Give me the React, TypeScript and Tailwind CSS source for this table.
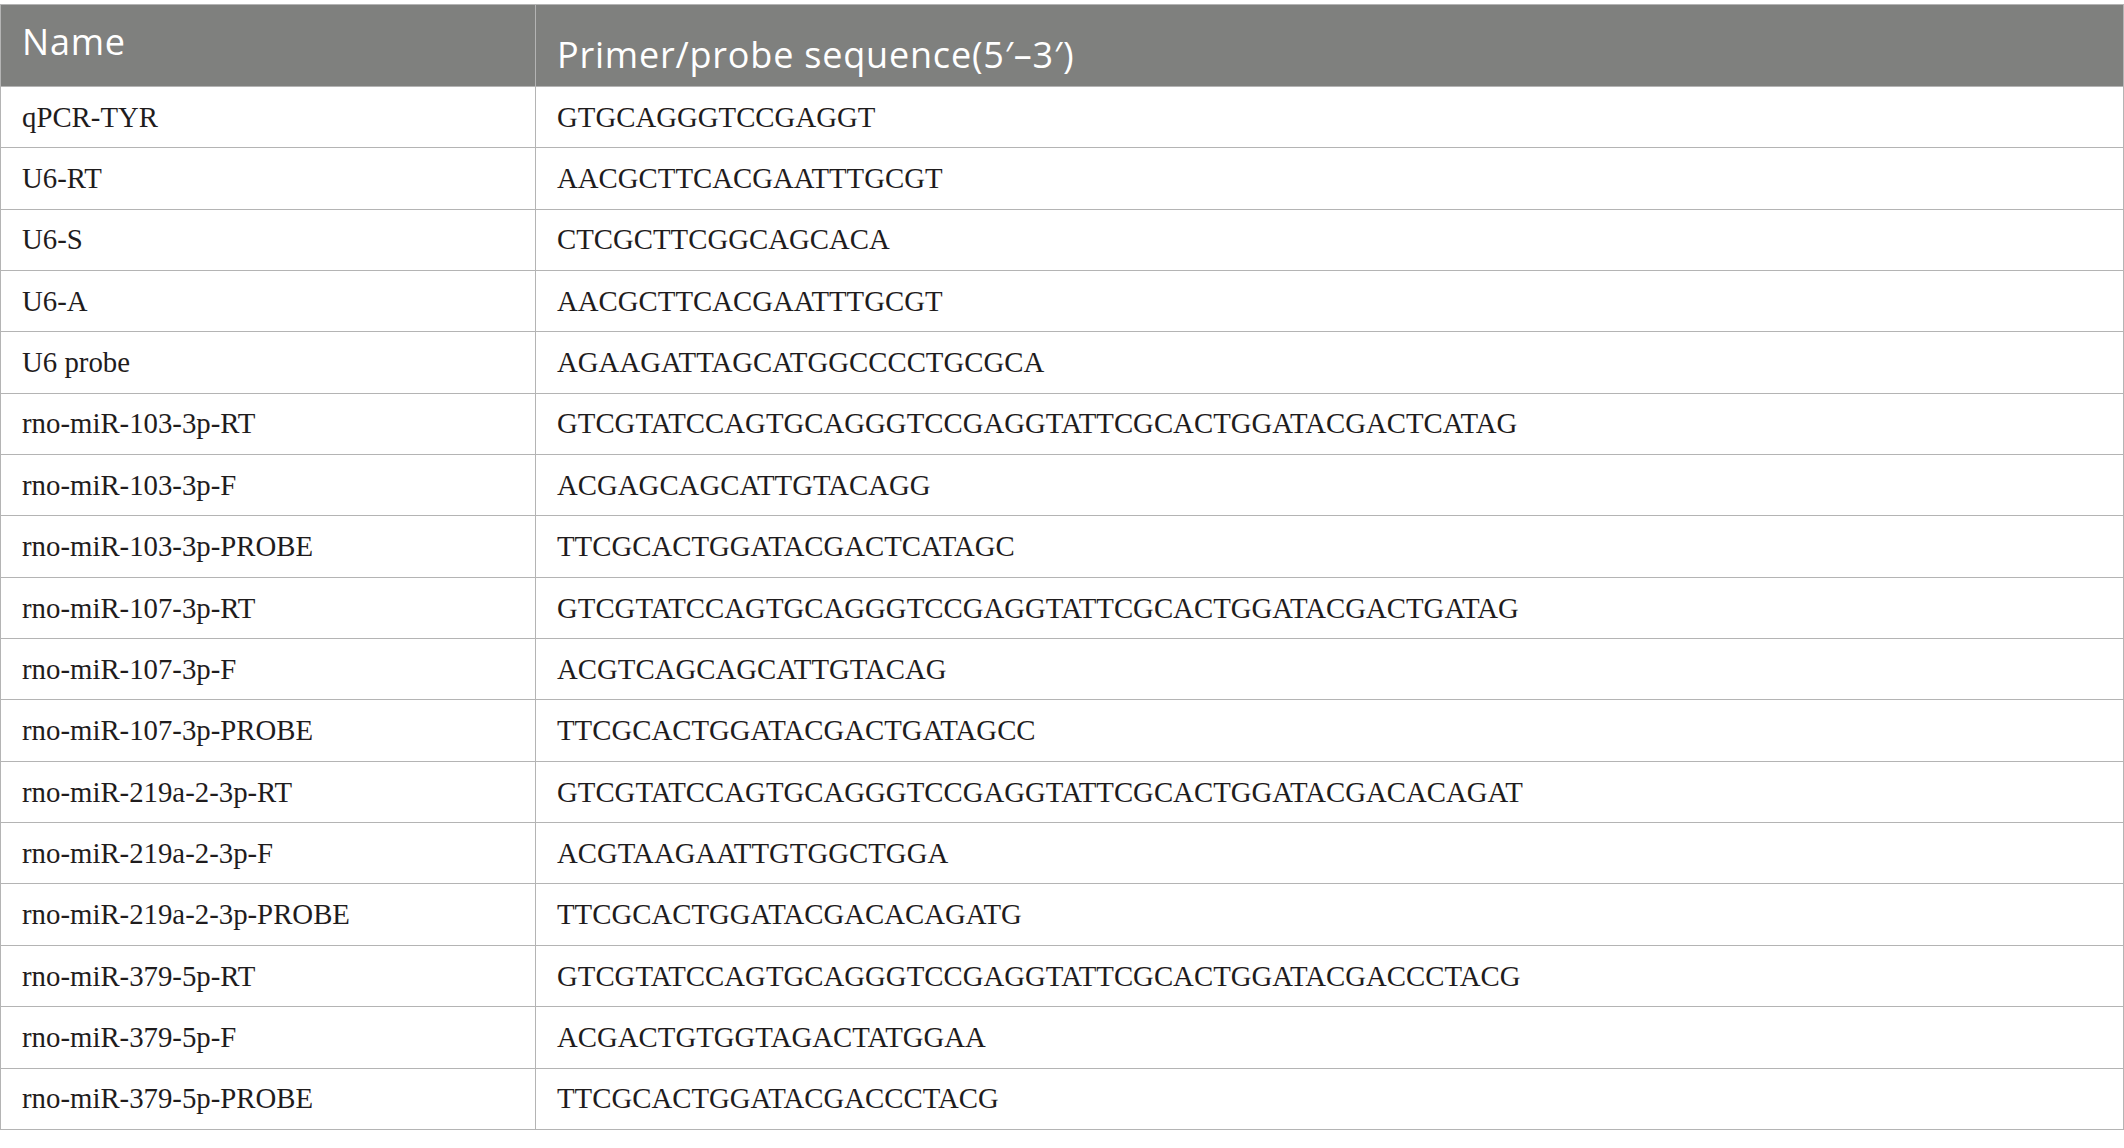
const rows: [string, string][] = [
  ["qPCR-TYR", "GTGCAGGGTCCGAGGT"],
  ["U6-RT", "AACGCTTCACGAATTTGCGT"],
  ["U6-S", "CTCGCTTCGGCAGCACA"],
  ["U6-A", "AACGCTTCACGAATTTGCGT"],
  ["U6 probe", "AGAAGATTAGCATGGCCCCTGCGCA"],
  ["rno-miR-103-3p-RT", "GTCGTATCCAGTGCAGGGTCCGAGGTATTCGCACTGGATACGACTCATAG"],
  ["rno-miR-103-3p-F", "ACGAGCAGCATTGTACAGG"],
  ["rno-miR-103-3p-PROBE", "TTCGCACTGGATACGACTCATAGC"],
  ["rno-miR-107-3p-RT", "GTCGTATCCAGTGCAGGGTCCGAGGTATTCGCACTGGATACGACTGATAG"],
  ["rno-miR-107-3p-F", "ACGTCAGCAGCATTGTACAG"],
  ["rno-miR-107-3p-PROBE", "TTCGCACTGGATACGACTGATAGCC"],
  ["rno-miR-219a-2-3p-RT", "GTCGTATCCAGTGCAGGGTCCGAGGTATTCGCACTGGATACGACACAGAT"],
  ["rno-miR-219a-2-3p-F", "ACGTAAGAATTGTGGCTGGA"],
  ["rno-miR-219a-2-3p-PROBE", "TTCGCACTGGATACGACACAGATG"],
  ["rno-miR-379-5p-RT", "GTCGTATCCAGTGCAGGGTCCGAGGTATTCGCACTGGATACGACCCTACG"],
  ["rno-miR-379-5p-F", "ACGACTGTGGTAGACTATGGAA"],
  ["rno-miR-379-5p-PROBE", "TTCGCACTGGATACGACCCTACG"],
];

export default function App() {
  return (
    <main className="min-h-screen bg-white pt-[4px]">
      <table className="w-full border-collapse border border-[#b4b4b4]">
        <thead>
          {/* grey header */}
          <tr className="h-[82px] bg-[#7f807e] text-white font-['Open_Sans',sans-serif] text-[36px] tracking-[0.8px]">
            <th className="w-[535px] border border-[#b4b4b4] pl-[21px] pt-[10px] text-left align-top font-normal leading-normal">
              Name
            </th>
            <th className="border border-[#b4b4b4] pl-[21px] pt-[23px] text-left align-top font-normal leading-normal">
              Primer/probe sequence(5′–3′)
            </th>
          </tr>
        </thead>
        <tbody className="font-['Liberation_Serif',serif] text-[28.8px] text-[#1f1c1d]">
          {rows.map(([name, seq], i) => (
            <tr key={i} className="h-[61.35px]">
              <td className="border border-[#b4b4b4] pl-[21px] align-middle leading-none">{name}</td>
              <td className="border border-[#b4b4b4] pl-[21px] align-middle leading-none">{seq}</td>
            </tr>
          ))}
        </tbody>
      </table>
    </main>
  );
}
